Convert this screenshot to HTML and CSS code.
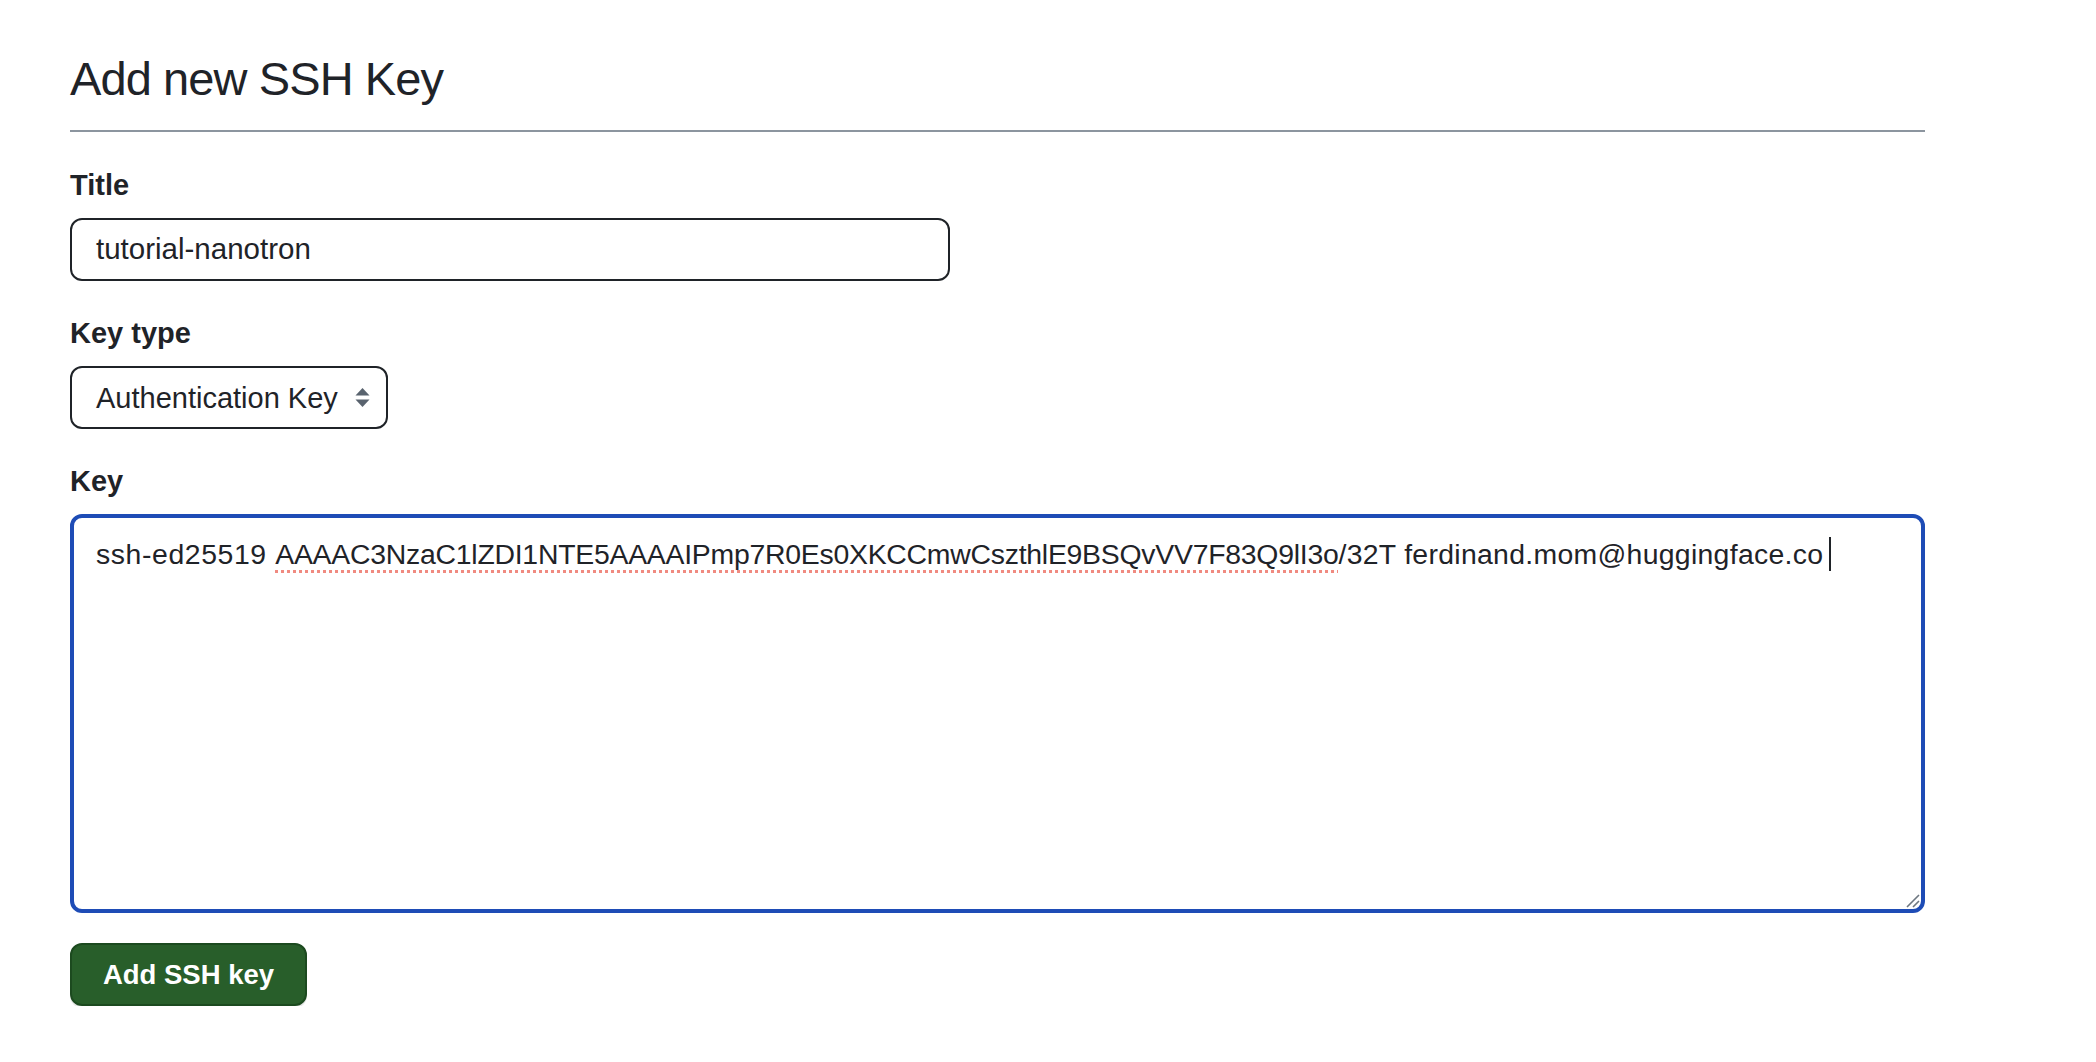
FILE: index.html
```html
<!DOCTYPE html>
<html lang="en">
<head>
<meta charset="utf-8">
<title>Add new SSH Key</title>
<link rel="stylesheet" href="styles.css">
</head>
<body>
<main class="page">
  <h2 class="subhead">Add new SSH Key</h2>
  <form class="form">
    <div class="group">
      <label class="label" for="title">Title</label>
      <div class="input title-input" id="title">tutorial-nanotron</div>
    </div>
    <div class="group">
      <label class="label">Key type</label>
      <div class="input select">
        <span>Authentication Key</span>
        <svg class="arrows" width="15" height="21" viewBox="0 0 15 21"><path d="M7.5 1 L14.5 8.5 H0.5 Z" fill="#59636e"/><path d="M7.5 20 L14.5 12.5 H0.5 Z" fill="#59636e"/></svg>
      </div>
    </div>
    <div class="group">
      <label class="label">Key</label>
      <div class="input keybox"><span class="k-type">ssh-ed25519 </span><span class="spell">AAAAC3NzaC1lZDI1NTE5AAAAIPmp7R0Es0XKCCmwCszthlE9BSQvVV7F83Q9lI3o</span><span class="k-rest">/32T ferdinand.mom@huggingface.co</span><span class="caret"></span>
        <svg class="grip" width="14" height="14" viewBox="0 0 14 14"><path d="M1 13 L13 1 M7 13 L13 7" stroke="#6e7781" stroke-width="1.6"/></svg>
      </div>
    </div>
    <button type="button" class="btn">Add SSH key</button>
  </form>
</main>
</body>
</html>
```

FILE: styles.css
```css
html, body {
  margin: 0;
  padding: 0;
  background: #ffffff;
}

body {
  font-family: "Liberation Sans", Arial, sans-serif;
  color: #1f2328;
}

.page {
  width: 1855px;
  padding: 50px 0 0 70px;
}

.subhead {
  margin: 0;
  font-size: 47px;
  font-weight: 400;
  line-height: 58px;
  letter-spacing: -0.9px;
  padding-bottom: 22px;
  border-bottom: 2px solid #8c959f;
}

.form {
  display: flex;
  flex-direction: column;
  padding-top: 33px;
}

.group {
  display: flex;
  flex-direction: column;
  align-items: flex-start;
  gap: 13px;
  margin-bottom: 32px;
}

.group:last-of-type {
  margin-bottom: 30px;
}

.label {
  font-size: 29px;
  font-weight: 700;
  line-height: 40px;
}

.input {
  box-sizing: border-box;
  border: 2px solid #1f2328;
  border-radius: 12px;
  font-size: 29.5px;
  line-height: 40px;
  color: #1f2328;
  background: #fff;
}

.title-input {
  width: 880px;
  height: 63px;
  padding: 9px 24px;
}

.select {
  width: 318px;
  height: 63px;
  padding: 9px 16px 9px 24px;
  font-size: 29px;
  display: flex;
  align-items: center;
  justify-content: space-between;
}

.arrows {
  display: block;
}

.keybox {
  position: relative;
  width: 1855px;
  height: 399px;
  border: 4px solid #1e4cb6;
  padding: 16px 22px;
  font-size: 28.4px;
  white-space: nowrap;
}

.k-type {
  letter-spacing: 0.6px;
}

.spell {
  letter-spacing: -0.25px;
  text-decoration: underline dotted #f08a80;
  text-decoration-thickness: 3px;
  text-underline-offset: 6px;
}

.k-rest {
  letter-spacing: 0.3px;
}

.caret {
  display: inline-block;
  width: 2px;
  height: 34px;
  margin-left: 6px;
  background: #1f2328;
  vertical-align: -7px;
}

.grip {
  position: absolute;
  right: 1px;
  bottom: 1px;
}

.btn {
  align-self: flex-start;
  width: 237px;
  height: 63px;
  border: 2px solid #1c4a1f;
  border-radius: 12px;
  background: #285e2a;
  color: #ffffff;
  font-family: "Liberation Sans", Arial, sans-serif;
  font-size: 27.5px;
  font-weight: 700;
  box-shadow: 0 2px 0 rgba(31, 35, 40, 0.1);
  padding: 0;
  margin-top: 0;
}
```
